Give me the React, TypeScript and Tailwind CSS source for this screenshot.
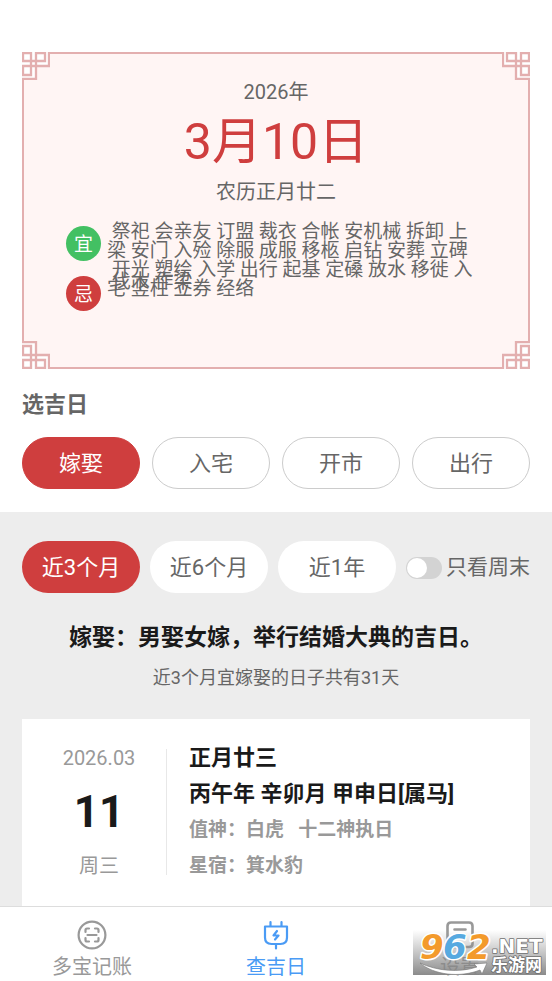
import { useState } from 'react'
import clsx from 'clsx'

const events = ['嫁娶', '入宅', '开市', '出行']
const ranges = ['近3个月', '近6个月', '近1年']

const goodLines = [
  ' 祭祀 会亲友 订盟 裁衣 合帐 安机械 拆卸 上',
  '梁 安门 入殓 除服 成服 移柩 启钻 安葬 立碑',
  ' 开光 塑绘 入学 出行 起基 定磉 放水 移徙 入',
  '宅 竖柱 立券 经络',
]
const badLines = [' 伐木 作梁']

const corners = [
  '-left-0.5 -top-0.5',
  '-right-0.5 -top-0.5 -scale-x-100',
  '-left-0.5 -bottom-0.5 -scale-y-100',
  '-right-0.5 -bottom-0.5 -scale-100',
]

function Corner({ className }: { className: string }) {
  return (
    <svg viewBox="0 0 28 28" className={clsx('absolute size-7', className)} aria-hidden="true">
      <path d="M0 0H28V14H14V28H0Z" fill="#fff" />
      <path
        d="M1 1H9V23H1V14H27V1H28M1 0V9H23V1H14V27H1V28"
        fill="none"
        stroke="#e3afaf"
        strokeWidth="2.3"
      />
    </svg>
  )
}

interface AlmanacRowProps {
  label: string
  lines: string[]
  color: string
}

function AlmanacRow({ label, lines, color }: AlmanacRowProps) {
  return (
    <div className="flex h-[50px] items-start gap-[6px]">
      <span className={clsx('mt-1 flex size-[35px] shrink-0 items-center justify-center rounded-full pt-1 text-[19px] text-white', color)}>
        {label}
      </span>
      <p className="whitespace-pre text-[19px] leading-[19px]">{lines.join('\n')}</p>
    </div>
  )
}

function ScanIcon() {
  return (
    <svg viewBox="0 0 30 30" className="size-[30px]" fill="none" stroke="currentColor" strokeWidth="2.2" strokeLinecap="round">
      <circle cx="15" cy="15" r="13.4" />
      <path d="M8.5 12V10Q8.5 8.5 10 8.5H12M18 8.5H20Q21.5 8.5 21.5 10V12M21.5 18V20Q21.5 21.5 20 21.5H18M12 21.5H10Q8.5 21.5 8.5 20V18M10.5 15H19.5" />
    </svg>
  )
}

function PlugIcon() {
  return (
    <svg viewBox="0 0 30 30" className="size-[30px]" fill="none" stroke="currentColor" strokeWidth="2.2" strokeLinecap="round" strokeLinejoin="round">
      <path d="M9.5 2V6M20.5 2V6M4 6.5H26V17.5Q26 24 19.5 24H10.5Q4 24 4 17.5ZM15 24V28.5" />
      <path d="M16 11L12.5 15.5H17.5L14 19.5" />
    </svg>
  )
}

function SettingsIcon() {
  return (
    <svg viewBox="0 0 30 30" className="size-[30px]" fill="none" stroke="currentColor" strokeWidth="2.6" strokeLinecap="round">
      <path d="M2.5 24V6Q2.5 2.5 6 2.5H24Q27.5 2.5 27.5 6V24Q27.5 27 24 27H6Q2.5 27 2.5 24M9.5 9.5H20.5M9.5 15H20.5" />
    </svg>
  )
}

function SiteMark() {
  return (
    <svg viewBox="0 0 133 56" className="pointer-events-none absolute bottom-1.5 right-1.5 w-[133px]" aria-label="962.NET 乐游网">
      <defs>
        <linearGradient id="shade" x1="0" y1="0" x2="0" y2="1">
          <stop offset="0" stopColor="#8c8c8c" stopOpacity="0" />
          <stop offset="1" stopColor="#858585" stopOpacity="0.95" />
        </linearGradient>
      </defs>
      <rect y="11" width="133" height="45" fill="url(#shade)" />
      <g
        fontFamily="'DejaVu Sans', sans-serif"
        fontWeight="700"
        stroke="#fff"
        strokeWidth="3"
        strokeLinejoin="round"
        paintOrder="stroke"
      >
        <g fontSize="34" fontStyle="italic">
          <text x="7" y="40" fill="#f39a2b">9</text>
          <text x="30" y="40" fill="#56a9e0">6</text>
          <text x="54" y="40" fill="#f39a2b">2</text>
        </g>
        <text x="78" y="34" fontSize="20" fill="#fff" stroke="#707070" strokeWidth="1.6">
          .NET
        </text>
        <text x="78" y="52" fontSize="17" fill="#fff" stroke="#707070" strokeWidth="1.6" fontFamily="'Noto Sans CJK SC', sans-serif">
          乐游网
        </text>
      </g>
      <path d="M7 44C24 52 46 54 64 48L61 45L74 44L69 55L67 51C47 59 21 56 7 44Z" fill="#fff" stroke="#777" strokeWidth="0.6" />
    </svg>
  )
}

const navItems = [
  { label: '多宝记账', Icon: ScanIcon },
  { label: '查吉日', Icon: PlugIcon },
  { label: '设置', Icon: SettingsIcon },
]

export default function App() {
  const [event, setEvent] = useState('嫁娶')
  const [range, setRange] = useState('近3个月')
  const [tab, setTab] = useState('查吉日')
  const [weekendOnly, setWeekendOnly] = useState(false)

  return (
    <div className="flex min-h-screen flex-col bg-white font-[Roboto,'Noto_Sans_CJK_SC',sans-serif] text-[#666]">
      <section className="px-[22px] pb-[23px] pt-[52px]">
        <div className="relative min-h-[317px] border-2 border-[#e3afaf] bg-[#fff5f4] pt-6">
          {corners.map(corner => (
            <Corner key={corner} className={corner} />
          ))}
          <div className="text-center">
            <p className="text-[20px] leading-7">2026年</p>
            <h1 className="text-[50px] leading-[72px] text-[#cf3e3e]">3月10日</h1>
            <p className="text-[20px] leading-7">农历正月廿二</p>
          </div>
          <div className="mt-4 pl-[42px]">
            <AlmanacRow label="宜" lines={goodLines} color="bg-[#43c063]" />
            <AlmanacRow label="忌" lines={badLines} color="bg-[#cf3e3e]" />
          </div>
        </div>

        <h2 className="mt-[22px] text-[22px] font-bold leading-7">选吉日</h2>
        <div className="mt-[18px] grid grid-cols-4 gap-3">
          {events.map(name => (
            <button
              key={name}
              type="button"
              onClick={() => setEvent(name)}
              className={clsx(
                'h-[52px] rounded-full border text-[22px]',
                event === name ? 'border-[#cf3e3e] bg-[#cf3e3e] text-white' : 'border-[#ccc] bg-white'
              )}
            >
              {name}
            </button>
          ))}
        </div>
      </section>

      <section className="flex flex-1 flex-col bg-[#ededed] px-[22px] pt-[29px]">
        <div className="flex items-center gap-[10px]">
          {ranges.map(name => (
            <button
              key={name}
              type="button"
              onClick={() => setRange(name)}
              className={clsx(
                'h-[52px] flex-1 whitespace-nowrap rounded-full text-[22px]',
                range === name ? 'bg-[#cf3e3e] text-white' : 'bg-white'
              )}
            >
              {name}
            </button>
          ))}
          <label className="flex items-center gap-1 whitespace-nowrap pt-0.5 text-[21px]">
            <input
              type="checkbox"
              checked={weekendOnly}
              onChange={e => setWeekendOnly(e.target.checked)}
              className="flex h-[22px] w-9 appearance-none items-center rounded-full bg-[#d3d3d3] px-px before:size-5 before:rounded-full before:bg-white checked:justify-end checked:bg-[#cf3e3e]"
            />
            只看周末
          </label>
        </div>

        <h2 className="mt-[29px] text-center text-[23px] font-bold leading-8 text-[#1a1a1a]">
          嫁娶：男娶女嫁，举行结婚大典的吉日。
        </h2>
        <p className="mt-3 text-center text-[18px] leading-6">近3个月宜嫁娶的日子共有31天</p>

        <article className="mt-[29px] flex-1 bg-white pt-[21px]">
          <div className="flex items-center">
            <div className="w-36 pl-[10px] text-center text-[20px] text-[#999]">
              <p className="leading-7">2026.03</p>
              <p className="text-[44px] font-bold leading-[80px] text-[#1a1a1a]">11</p>
              <p className="leading-7">周三</p>
            </div>
            <div className="h-[126px] w-px bg-[#e8e8e8]" />
            <div className="whitespace-pre pl-[22px] font-bold leading-9">
              <h3 className="text-[22px] leading-9 text-[#1a1a1a]">正月廿三</h3>
              <p className="text-[22px] leading-9 text-[#1a1a1a]">丙午年 辛卯月 甲申日[属马]</p>
              <p className="text-[19px] leading-9 text-[#999]">值神：白虎   十二神执日</p>
              <p className="text-[19px] leading-9 text-[#999]">星宿：箕水豹</p>
            </div>
          </div>
        </article>
      </section>

      <nav className="sticky bottom-0 grid h-[75px] grid-cols-3 border-t border-[#ddd] bg-white">
        {navItems.map(({ label, Icon }) => (
          <button
            key={label}
            type="button"
            onClick={() => setTab(label)}
            className={clsx(
              'flex flex-col items-center pt-[13px] text-[20px]',
              tab === label ? 'text-[#4a9bf5]' : 'text-[#999]'
            )}
          >
            <Icon />
            <span className="mt-[3px] leading-7">{label}</span>
          </button>
        ))}
        <SiteMark />
      </nav>
    </div>
  )
}
